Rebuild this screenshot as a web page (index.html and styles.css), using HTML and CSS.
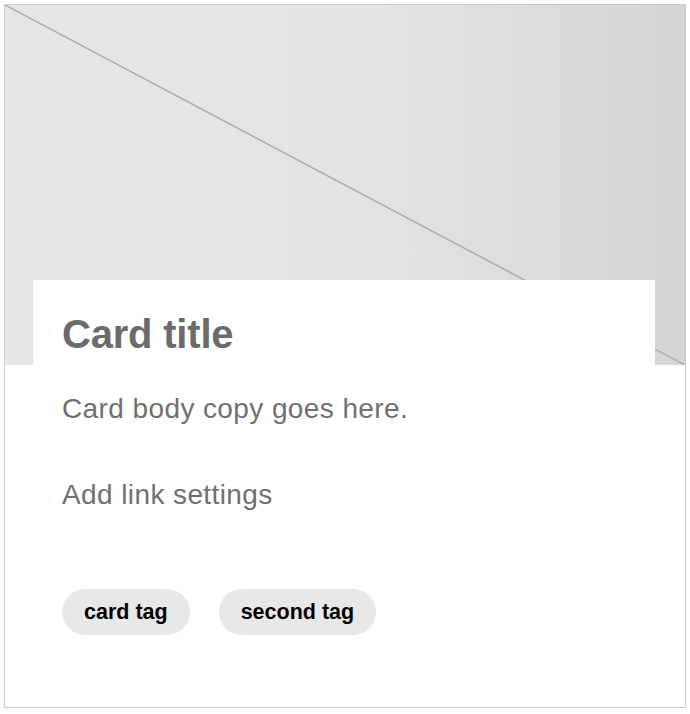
FILE: index.html
```html
<!DOCTYPE html>
<html lang="en">
<head>
    <meta charset="UTF-8">
    <meta name="viewport" content="width=device-width, initial-scale=1.0">
    <title>Card</title>
    <link rel="stylesheet" href="styles.css">
</head>
<body>
    <div class="card">
        <div class="card-media">
            <svg class="card-media-line" viewBox="0 0 680 360" preserveAspectRatio="none">
                <line x1="0" y1="0" x2="680" y2="360" stroke="#ababab" stroke-width="1.5"/>
            </svg>
        </div>
        <div class="card-content">
            <h2 class="card-title">Card title</h2>
            <p class="card-body">Card body copy goes here.</p>
            <p class="card-link">Add link settings</p>
            <div class="card-tags">
                <span class="tag">card tag</span>
                <span class="tag">second tag</span>
            </div>
        </div>
    </div>
</body>
</html>
```

FILE: styles.css
```css
body {
    margin: 0;
    padding: 4px;
    background-color: #ffffff;
    font-family: 'Liberation Sans', Arial, sans-serif;
}
.card {
    border: 1px solid #cccccc;
    height: 702px;
    background-color: #ffffff;
}
.card-media {
    height: 360px;
    background: linear-gradient(to right, #e7e7e7 0%, #e4e4e4 55%, #d5d5d5 100%);
}
.card-media-line {
    display: block;
    width: 100%;
    height: 100%;
}
.card-content {
    position: relative;
    margin: -85px 30px 0 28px;
    padding: 30px 28px 0 29px;
    background-color: #ffffff;
}
.card-title {
    margin: 0;
    font-size: 40px;
    line-height: 48px;
    font-weight: 700;
    color: #6b6b6b;
    letter-spacing: -0.2px;
}
.card-body, .card-link {
    margin: 0;
    font-size: 28px;
    line-height: 36px;
    letter-spacing: 0.4px;
    color: #707070;
}
.card-body {
    margin-top: 33px;
}
.card-link {
    margin-top: 50px;
}
.card-tags {
    display: flex;
    gap: 29px;
    margin-top: 76px;
}
.tag {
    display: inline-block;
    height: 46px;
    line-height: 46px;
    padding: 0 22px;
    border-radius: 23px;
    background-color: #e8e8e8;
    color: #000000;
    font-size: 21.5px;
    font-weight: 700;
}
```
